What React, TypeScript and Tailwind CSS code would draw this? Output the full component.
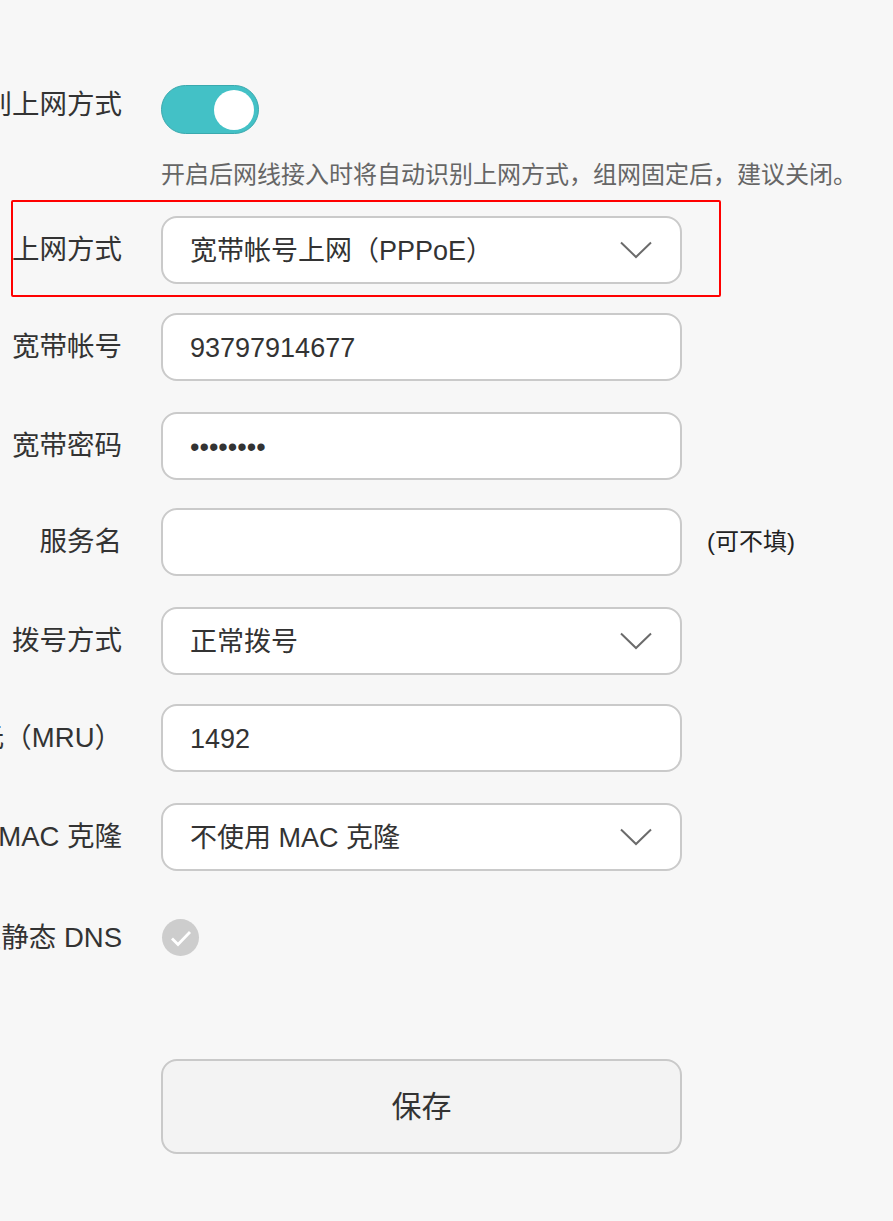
import React from 'react';

const Label: React.FC<{ children: React.ReactNode }> = ({ children }) => (
  <div className="w-[122px] shrink-0 flex justify-end overflow-hidden whitespace-nowrap text-[27.5px] text-[#333]">
    <span>{children}</span>
  </div>
);

const Chevron = () => (
  <svg width="32" height="18" viewBox="0 0 32 18" fill="none" className="shrink-0">
    <path d="M1 1.5 L16 16 L31 1.5" stroke="#6b6b6b" strokeWidth="2" />
  </svg>
);

const Field: React.FC<{ value?: string; select?: boolean }> = ({ value, select }) => (
  <div className="ml-[39px] w-[521px] h-[68px] shrink-0 bg-white border-2 border-[#cacaca] rounded-[16px] flex items-center pl-[27px] pr-[28px]">
    <span className="flex-1 pt-[2px] whitespace-nowrap text-[27px] text-[#333]">{value}</span>
    {select && <Chevron />}
  </div>
);

const App: React.FC = () => {
  return (
    <div className="min-h-screen bg-[#f7f7f7] pt-[85px] font-['Liberation_Sans','Noto_Sans_CJK_SC',sans-serif] overflow-hidden">
      <div className="flex items-center h-[49px]">
        <div className="-mt-[10px] flex">
          <Label>自动识别上网方式</Label>
        </div>
        <div className="ml-[39px] w-[98px] h-[49px] rounded-full bg-[#43c1c6] border border-[#3aa9ae] flex items-center justify-end pr-[4px]">
          <div className="w-[40px] h-[40px] rounded-full bg-white" />
        </div>
      </div>

      <p className="ml-[161px] mt-[25px] text-[24px] leading-[32px] text-[#666] whitespace-nowrap">
        开启后网线接入时将自动识别上网方式，组网固定后，建议关闭。
      </p>

      <div className="relative mt-[25px] flex items-center">
        <div className="absolute left-[11px] -top-[16px] w-[710px] h-[97px] border-2 border-[#ff0000] rounded-[2px]" />
        <Label>上网方式</Label>
        <Field value="宽带帐号上网（PPPoE）" select />
      </div>

      <div className="mt-[29px] flex items-center">
        <Label>宽带帐号</Label>
        <Field value="93797914677" />
      </div>

      <div className="mt-[31px] flex items-center">
        <Label>宽带密码</Label>
        <Field value="••••••••" />
      </div>

      <div className="mt-[28px] flex items-center">
        <Label>服务名</Label>
        <Field />
        <span className="ml-[25px] text-[24px] text-[#222] whitespace-nowrap">(可不填)</span>
      </div>

      <div className="mt-[31px] flex items-center">
        <Label>拨号方式</Label>
        <Field value="正常拨号" select />
      </div>

      <div className="mt-[29px] flex items-center">
        <Label>最大接收单元（MRU）</Label>
        <Field value="1492" />
      </div>

      <div className="mt-[31px] flex items-center">
        <Label>MAC 克隆</Label>
        <Field value="不使用 MAC 克隆" select />
      </div>

      <div className="mt-[48px] flex items-center h-[37px]">
        <Label>手动设置静态 DNS</Label>
        <div className="ml-[40px] w-[37px] h-[37px] rounded-full bg-[#cdcdcd] flex items-center justify-center">
          <svg width="37" height="37" viewBox="0 0 37 37" fill="none">
            <path d="M10 19.5 L16 25.5 L28 13" stroke="#fff" strokeWidth="2.8" />
          </svg>
        </div>
      </div>

      <div className="mt-[103px] flex">
        <div className="w-[122px] shrink-0" />
        <button className="ml-[39px] w-[521px] h-[95px] bg-[#f3f3f3] border-2 border-[#c9c9c9] rounded-[16px] text-[30px] text-[#333]">
          保存
        </button>
      </div>
    </div>
  );
};

export default App;
